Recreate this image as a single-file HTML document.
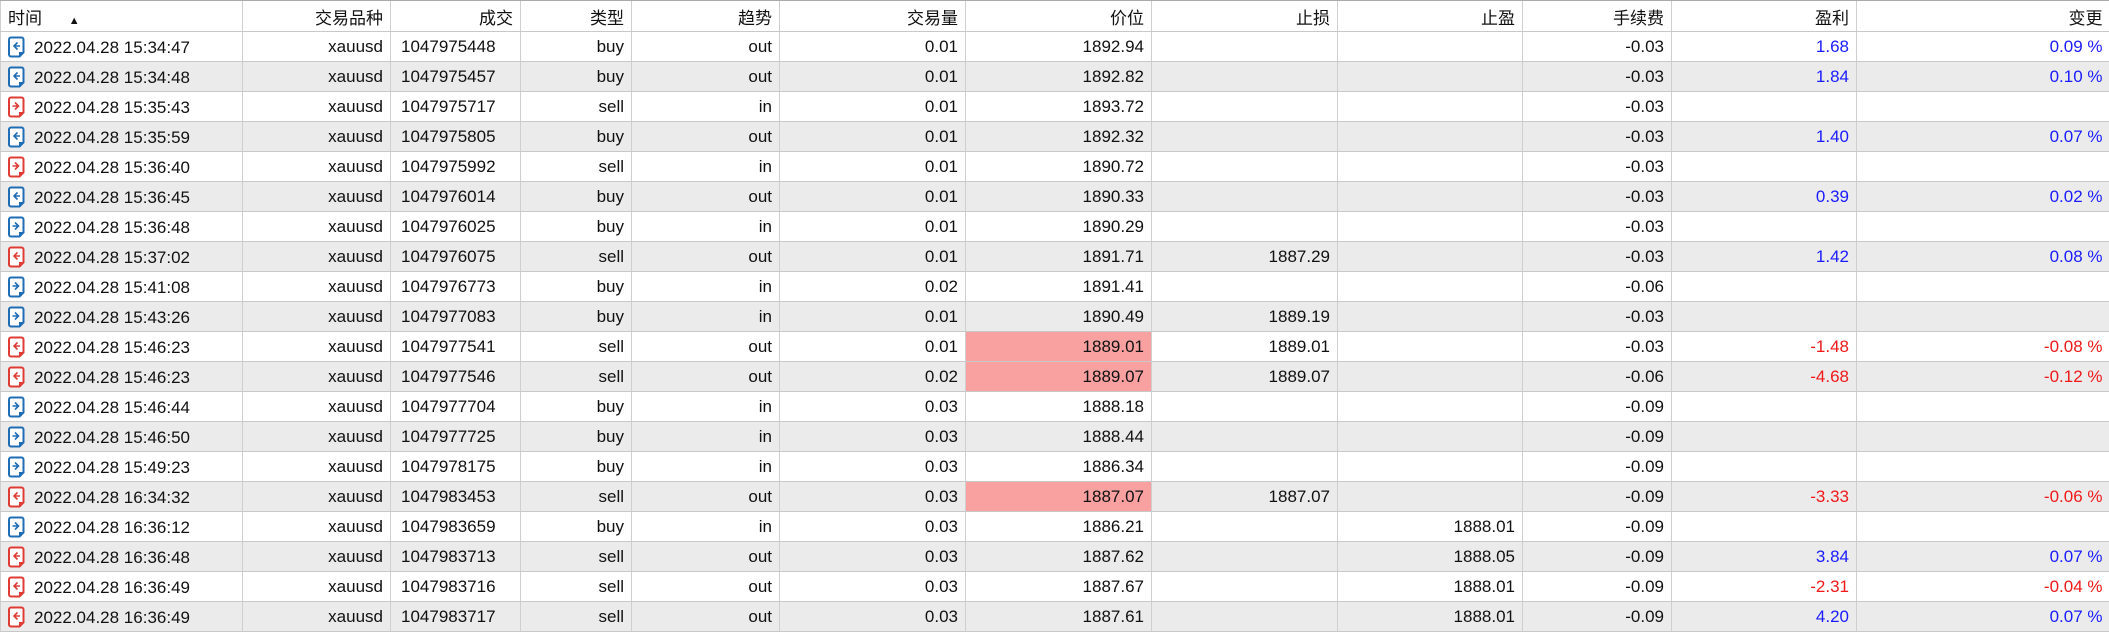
<!DOCTYPE html>
<html><head><meta charset="utf-8"><style>
body{margin:0;background:#fff;width:2109px;height:632px;overflow:hidden;font-family:"Liberation Sans","Noto Sans CJK SC",sans-serif;font-size:17px;color:#111}
table{border-collapse:collapse;table-layout:fixed;width:2109px;position:absolute;left:0;top:0}
td,th{height:29px;padding:0 7px 0 4px;text-align:right;white-space:nowrap;border-left:1px solid #cfcfcf;border-bottom:1px solid #c8c8c8;font-weight:normal;overflow:hidden}
th{height:30px;border-top:1px solid #aaa;border-bottom:1px solid #c8c8c8}
tr.g td{background:#ebebeb}
td.p{background:#f9a0a0!important}
td:first-child,th:first-child{text-align:left;padding-left:7px}
.b{color:#1a1aff}.r{color:#f01818}
svg.i{vertical-align:-5px;margin-right:8px}
</style></head><body>
<table>
<colgroup><col style="width:242px"><col style="width:148px"><col style="width:130px"><col style="width:111px"><col style="width:148px"><col style="width:186px"><col style="width:186px"><col style="width:186px"><col style="width:185px"><col style="width:149px"><col style="width:185px"><col style="width:253px"></colgroup>
<tr><th>时间 <span style="font-size:11px;margin-left:22px">▲</span></th><th>交易品种</th><th>成交</th><th>类型</th><th>趋势</th><th>交易量</th><th>价位</th><th>止损</th><th>止盈</th><th>手续费</th><th>盈利</th><th>变更</th></tr>
<script>
const R=[
["15:34:47","1047975448","buy","out","0.01","1892.94","","","-0.03","1.68","0.09 %"],
["15:34:48","1047975457","buy","out","0.01","1892.82","","","-0.03","1.84","0.10 %"],
["15:35:43","1047975717","sell","in","0.01","1893.72","","","-0.03","",""],
["15:35:59","1047975805","buy","out","0.01","1892.32","","","-0.03","1.40","0.07 %"],
["15:36:40","1047975992","sell","in","0.01","1890.72","","","-0.03","",""],
["15:36:45","1047976014","buy","out","0.01","1890.33","","","-0.03","0.39","0.02 %"],
["15:36:48","1047976025","buy","in","0.01","1890.29","","","-0.03","",""],
["15:37:02","1047976075","sell","out","0.01","1891.71","1887.29","","-0.03","1.42","0.08 %"],
["15:41:08","1047976773","buy","in","0.02","1891.41","","","-0.06","",""],
["15:43:26","1047977083","buy","in","0.01","1890.49","1889.19","","-0.03","",""],
["15:46:23","1047977541","sell","out","0.01","1889.01","1889.01","","-0.03","-1.48","-0.08 %",1],
["15:46:23","1047977546","sell","out","0.02","1889.07","1889.07","","-0.06","-4.68","-0.12 %",1],
["15:46:44","1047977704","buy","in","0.03","1888.18","","","-0.09","",""],
["15:46:50","1047977725","buy","in","0.03","1888.44","","","-0.09","",""],
["15:49:23","1047978175","buy","in","0.03","1886.34","","","-0.09","",""],
["16:34:32","1047983453","sell","out","0.03","1887.07","1887.07","","-0.09","-3.33","-0.06 %",1],
["16:36:12","1047983659","buy","in","0.03","1886.21","","1888.01","-0.09","",""],
["16:36:48","1047983713","sell","out","0.03","1887.62","","1888.05","-0.09","3.84","0.07 %"],
["16:36:49","1047983716","sell","out","0.03","1887.67","","1888.01","-0.09","-2.31","-0.04 %"],
["16:36:49","1047983717","sell","out","0.03","1887.61","","1888.01","-0.09","4.20","0.07 %"]];
let h="";
R.forEach((r,i)=>{
const col=r[2]=="buy"?"#1f6db5":"#e03c36";
const arr=r[3]=="out"?'<path d="M9.5 6.5L6 10l3.5 3.5M6 10h6" fill="none" stroke="'+col+'" stroke-width="1.6"/>':'<path d="M7 6.5l3.5 3.5L7 13.5M10.5 10H4.5" fill="none" stroke="'+col+'" stroke-width="1.6"/>';
const icon='<svg class="i" width="18" height="22" viewBox="0 0 18 22"><path d="M3 1.5h10.5a2 2 0 0 1 2 2v13l-4 4H3a2 2 0 0 1-2-2v-15a2 2 0 0 1 2-2z" fill="#fff" stroke="'+col+'" stroke-width="2"/><path d="M15.5 16h-4.5v4.5z" fill="'+col+'"/>'+arr+'</svg>';
const c=r[9].startsWith("-")?"r":"b";
h+='<tr'+(i%2?' class="g"':'')+'><td>'+icon+'2022.04.28 '+r[0]+'</td><td>xauusd</td><td style="text-align:left;padding-left:10px">'+r[1]+'</td><td>'+r[2]+'</td><td>'+r[3]+'</td><td>'+r[4]+'</td><td'+(r[11]?' class="p"':'')+'>'+r[5]+'</td><td>'+r[6]+'</td><td>'+r[7]+'</td><td>'+r[8]+'</td><td class="'+c+'">'+r[9]+'</td><td class="'+c+'">'+r[10]+'</td></tr>';
});
document.write(h);
</script>
</table>
</body></html>
